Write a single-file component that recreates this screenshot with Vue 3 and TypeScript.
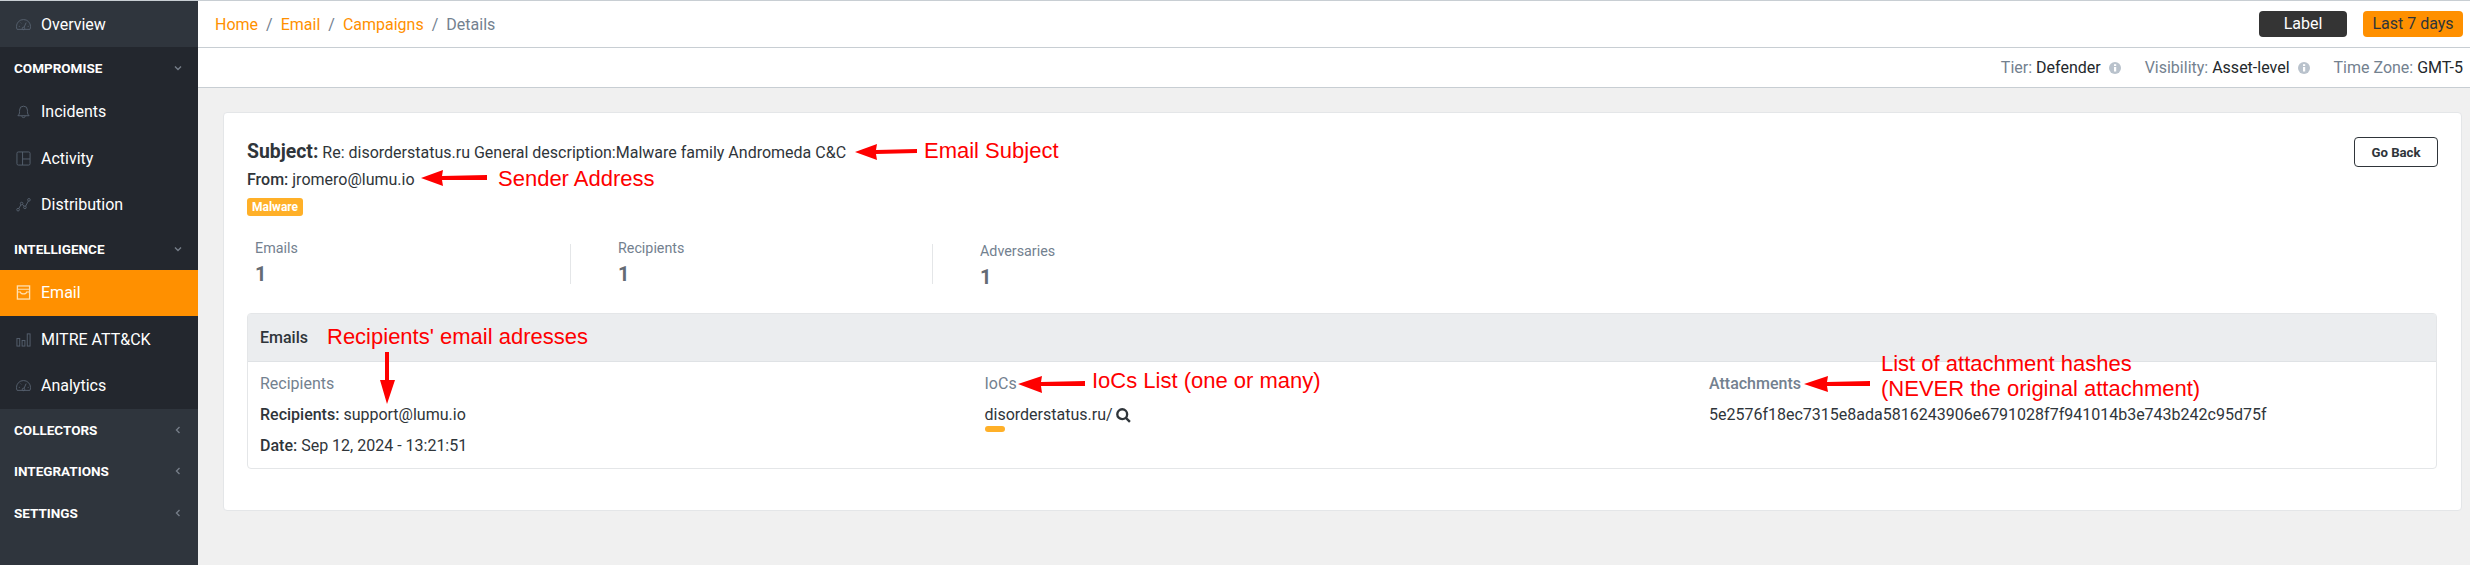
<script setup lang="ts">
interface NavRow { kind: 'item' | 'section'; label: string; icon?: string; active?: boolean; open?: boolean; tone?: string }
const rows: NavRow[] = [
  { kind: 'item', label: 'Overview', icon: 'gauge', tone: 'light' },
  { kind: 'section', label: 'COMPROMISE', open: true },
  { kind: 'item', label: 'Incidents', icon: 'bell' },
  { kind: 'item', label: 'Activity', icon: 'layout' },
  { kind: 'item', label: 'Distribution', icon: 'nodes' },
  { kind: 'section', label: 'INTELLIGENCE', open: true },
  { kind: 'item', label: 'Email', icon: 'inbox', active: true },
  { kind: 'item', label: 'MITRE ATT&CK', icon: 'bars' },
  { kind: 'item', label: 'Analytics', icon: 'gauge' },
  { kind: 'section', label: 'COLLECTORS', tone: 'light' },
  { kind: 'section', label: 'INTEGRATIONS', tone: 'light' },
  { kind: 'section', label: 'SETTINGS', tone: 'light' },
]
const crumbs = ['Home', 'Email', 'Campaigns']
const stats = [
  { label: 'Emails', value: '1' },
  { label: 'Recipients', value: '1' },
  { label: 'Adversaries', value: '1' },
]
</script>

<template>
  <div class="page">
    <aside class="sidebar">
      <div
        v-for="r in rows"
        :key="r.label"
        :class="[r.kind === 'item' ? 'nav-item' : 'nav-section', { active: r.active, light: r.tone === 'light' }]"
      >
        <svg v-if="r.icon" class="nav-icon" viewBox="0 0 16 16" fill="none" stroke="currentColor" stroke-width="1">
          <template v-if="r.icon === 'gauge'">
            <path d="M1.2 13.2C.7 12.2.5 11.2.5 10.2a7.500 7.500 0 0 1 15 0c0 1-.2 2-.7 3z" />
            <circle cx="8" cy="12.200" r="1.300" />
            <path d="M8.600 11l2.200-5M3 10h1M12.500 10h1M5 6l.7.7" />
          </template>
          <template v-else-if="r.icon === 'bell'">
            <path d="M2 12.500c1.200-1 1.800-2.200 1.800-4.500V6.500a4.200 4.200 0 0 1 8.400 0V8c0 2.300.6 3.500 1.800 4.500z" />
            <path d="M6.200 13c0 2 3.600 2 3.600 0" />
          </template>
          <template v-else-if="r.icon === 'layout'">
            <rect x="1" y="1" width="14" height="14" rx="1.500" />
            <path d="M7 1v14M7 8.500h8" />
          </template>
          <template v-else-if="r.icon === 'nodes'">
            <circle cx="2.200" cy="13.500" r="1.400" />
            <circle cx="6" cy="7" r="1.400" />
            <circle cx="9.500" cy="11" r="1.400" />
            <circle cx="13.800" cy="3" r="1.400" />
            <path d="M3 12.300 5.300 8.200M7 8l1.600 1.900M10.200 9.800l3-5.500" />
          </template>
          <template v-else-if="r.icon === 'inbox'">
            <rect x="1.500" y="1" width="13" height="14" stroke-width="1.400" />
            <path d="M1.500 4.500h13M1.500 7.500h3.200c.5 2.600 6.100 2.600 6.600 0h3.200" stroke-width="1.200" />
          </template>
          <template v-else-if="r.icon === 'bars'">
            <rect x="1" y="7" width="3" height="8" />
            <rect x="6.500" y="9" width="3" height="6" />
            <rect x="12" y="2" width="3" height="13" />
          </template>
        </svg>
        <span>{{ r.label }}</span>
        <svg v-if="r.kind === 'section'" class="chev" viewBox="0 0 8 8" fill="none" stroke="currentColor" stroke-width="1.400">
          <path v-if="r.open" d="M1 2.500 4 5.500 7 2.500" />
          <path v-else d="M5.500 1 2.500 4 5.500 7" />
        </svg>
      </div>
    </aside>

    <main class="main">
      <header class="topbar">
        <nav class="crumbs">
          <template v-for="c in crumbs" :key="c">
            <a>{{ c }}</a><i>/</i>
          </template>
          <span>Details</span>
        </nav>
        <div class="top-actions">
          <button class="btn-dark">Label</button>
          <button class="btn-orange">Last 7 days</button>
        </div>
      </header>
      <div class="subbar">
        <span class="meta">Tier: <b>Defender</b></span>
        <svg class="info" viewBox="0 0 12 12"><circle cx="6" cy="6" r="6" fill="#b9c2cc" /><rect x="5" y="5" width="2.200" height="4.500" fill="#fff" /><rect x="5" y="2.200" width="2.200" height="1.800" fill="#fff" /></svg>
        <span class="meta">Visibility: <b>Asset-level</b></span>
        <svg class="info" viewBox="0 0 12 12"><circle cx="6" cy="6" r="6" fill="#b9c2cc" /><rect x="5" y="5" width="2.200" height="4.500" fill="#fff" /><rect x="5" y="2.200" width="2.200" height="1.800" fill="#fff" /></svg>
        <span class="meta">Time Zone: <b>GMT-5</b></span>
      </div>

      <section class="card">
        <button class="go-back">Go Back</button>
        <div class="subject"><strong>Subject:</strong> Re: disorderstatus.ru General description:Malware family Andromeda C&amp;C</div>
        <div class="from"><strong>From:</strong> jromero@lumu.io</div>
        <span class="badge">Malware</span>
        <div class="stats">
          <div v-for="s in stats" :key="s.label" class="stat">
            <div class="stat-label">{{ s.label }}</div>
            <div class="stat-value">{{ s.value }}</div>
          </div>
        </div>
        <div class="panel">
          <div class="panel-head">Emails</div>
          <div class="panel-body">
            <div class="col">
              <div class="col-title">Recipients</div>
              <div class="line"><strong>Recipients:</strong> support@lumu.io</div>
              <div class="line"><strong>Date:</strong> Sep 12, 2024 - 13:21:51</div>
            </div>
            <div class="col">
              <div class="col-title">IoCs</div>
              <div class="line ioc">disorderstatus.ru/
                <svg class="search" viewBox="0 0 14 14" fill="none" stroke="#2f353a" stroke-width="2.200"><circle cx="5.800" cy="5.800" r="4.600" /><path d="M9.200 9.200 13 13" /></svg>
              </div>
              <div class="sev"></div>
            </div>
            <div class="col">
              <div class="col-title">Attachments</div>
              <div class="line">5e2576f18ec7315e8ada5816243906e6791028f7f941014b3e743b242c95d75f</div>
            </div>
          </div>
        </div>
      </section>
    </main>

    <svg class="arrows" viewBox="0 0 2470 565" fill="#fe0000">
      <path d="M855 152 877 144 876 150 917 149 917 153 876 154 877 160z" />
      <path d="M421 178 443 170 442 176 487 175 487 180 442 180 443 186z" />
      <path d="M1018 384 1042 376 1041 382 1085 381 1085 386 1041 386 1042 393z" />
      <path d="M1804 384 1828 376 1827 382 1870 381 1870 386 1827 386 1828 392z" />
      <path d="M387 404 380 380 385 380 385 352 389 352 389 380 395 380z" />
    </svg>
    <div class="note note-subject">Email Subject</div>
    <div class="note note-sender">Sender Address</div>
    <div class="note note-recipients">Recipients' email adresses</div>
    <div class="note note-iocs">IoCs List (one or many)</div>
    <div class="note note-attach">List of attachment hashes<br />(NEVER the original attachment)</div>
  </div>
</template>

<style>
html, body { margin: 0; background: #f0f0f0; }
</style>

<style scoped>
.page {
  position: relative;
  display: flex;
  width: 2470px;
  height: 565px;
  overflow: hidden;
  box-sizing: border-box;
  border-top: 1px solid #c8ced3;
  background: #f0f0f0;
  font-family: Roboto, "Liberation Sans", sans-serif;
  font-size: 16px;
  color: #2f353a;
}
.sidebar {
  flex: 0 0 198px;
  background: #2f353d;
  color: #fff;
}
.nav-item {
  display: flex;
  align-items: center;
  height: 46.500px;
  padding-left: 16px;
  background: #23272e;
  box-sizing: border-box;
}
.nav-item.light { background: #2f353d; height: 46px; }
.nav-item.active { background: #ff9000; }
.nav-icon {
  flex: 0 0 15px;
  width: 15px;
  height: 15px;
  margin-right: 10px;
  color: #56616f;
}
.active .nav-icon { color: #ffe0b0; }
.nav-section {
  display: flex;
  align-items: center;
  justify-content: space-between;
  height: 41.500px;
  padding: 0 16px 0 14px;
  background: #23272e;
  font-size: 13.500px;
  font-weight: 700;
  box-sizing: border-box;
}
.nav-section.light { background: #2f353d; }
.chev {
  width: 8px;
  height: 8px;
  color: #757d88;
}
.main { flex: 1; min-width: 0; }
.topbar {
  display: flex;
  align-items: center;
  justify-content: space-between;
  height: 47px;
  padding: 0 7px 0 17px;
  background: #fff;
  border-bottom: 1px solid #c8ced3;
  box-sizing: border-box;
}
.crumbs a { color: #ff9000; }
.crumbs i { margin: 0 8px; font-style: normal; color: #73818f; }
.crumbs span { color: #73818f; }
.top-actions { display: flex; gap: 16px; margin-top: -1px; }
.top-actions button {
  height: 26px;
  border: 0;
  border-radius: 4px;
  font: inherit;
  padding: 0;
}
.btn-dark { width: 88px; background: #343434; color: #fff; }
.btn-orange { width: 100px; background: #ff9000; color: #2f353a; }
.subbar {
  display: flex;
  align-items: center;
  justify-content: flex-end;
  height: 40px;
  padding-right: 7px;
  background: #fff;
  border-bottom: 1px solid #c8ced3;
  box-sizing: border-box;
}
.meta { color: #73818f; }
.meta b { font-weight: 400; color: #23282c; }
.info { width: 12px; height: 12px; margin: 0 24px 0 8px; }
.card {
  position: relative;
  width: 2239px;
  height: 399px;
  margin: 24px 0 0 25px;
  padding: 27px 23px 0;
  background: #fff;
  border: 1px solid #e4e6e8;
  border-radius: 4px;
  box-sizing: border-box;
}
.go-back {
  position: absolute;
  top: 24px;
  right: 23px;
  width: 84px;
  height: 30px;
  background: #fff;
  border: 1px solid #2f353a;
  border-radius: 4px;
  font: 700 13.200px Roboto, sans-serif;
  color: #2f353a;
  padding: 0;
}
.subject { font-size: 16px; line-height: 24px; height: 24px; }
.subject strong { font-size: 19.400px; font-weight: 700; }
.from { font-size: 16px; line-height: 20px; margin-top: 6px; }
.from strong, .line strong { font-weight: 500; }
.badge {
  display: inline-block;
  margin-top: 8px;
  padding: 0 5px;
  height: 18px;
  line-height: 18px;
  background: #ffb028;
  border-radius: 3px;
  color: #fff;
  font-size: 12px;
  font-weight: 700;
}
.stats { display: flex; margin-top: 17px; height: 77px; }
.stat {
  width: 362px;
  height: 40px;
  margin-top: 11px;
  padding-left: 47px;
  box-sizing: border-box;
  border-right: 1px solid #e4e6e8;
}
.stat:first-child { width: 324px; padding-left: 8px; }
.stat:last-child { border-right: 0; padding-top: 3px; }
.stat-label { font-size: 14.300px; line-height: 18px; color: #73818f; margin-top: -5px; }
.stat-value { font-size: 20px; font-weight: 700; line-height: 24px; margin-top: 5px; color: #646b74; }
.panel {
  width: 2190px;
  height: 156px;
  margin-top: 3px;
  background: #fff;
  border: 1px solid #e4e6e8;
  border-radius: 4px;
  box-sizing: border-box;
}
.panel-head {
  height: 48px;
  padding-left: 12px;
  line-height: 48px;
  font-size: 16px;
  font-weight: 500;
  background: #ebedef;
  border-bottom: 1px solid #dfe2e5;
  box-sizing: border-box;
}
.panel-body { display: flex; padding: 12px 0 0 12px; }
.col { flex: 0 0 724.500px; }
.col-title { color: #73818f; font-weight: 400; line-height: 20px; height: 20px; }
.col:last-child .col-title { font-weight: 500; }
.line { line-height: 20px; margin-top: 11px; font-size: 16px; }
.line + .line { margin-top: 11px; }
.ioc { display: flex; align-items: center; gap: 3px; }
.search { width: 15px; height: 15px; }
.sev { width: 20px; height: 6px; margin-top: 1px; background: #ffb028; border-radius: 3px; }
.arrows {
  position: absolute;
  left: 0;
  top: -1px;
  width: 2470px;
  height: 565px;
  pointer-events: none;
}
.note {
  position: absolute;
  color: #fe0000;
  font-family: "Liberation Sans", Arial, sans-serif;
  font-size: 22px;
  line-height: 25px;
  white-space: nowrap;
}
.note-subject { left: 924px; top: 137px; }
.note-sender { left: 498px; top: 165px; }
.note-recipients { left: 327px; top: 323px; }
.note-iocs { left: 1092px; top: 367px; }
.note-attach { left: 1881px; top: 350px; }
</style>
